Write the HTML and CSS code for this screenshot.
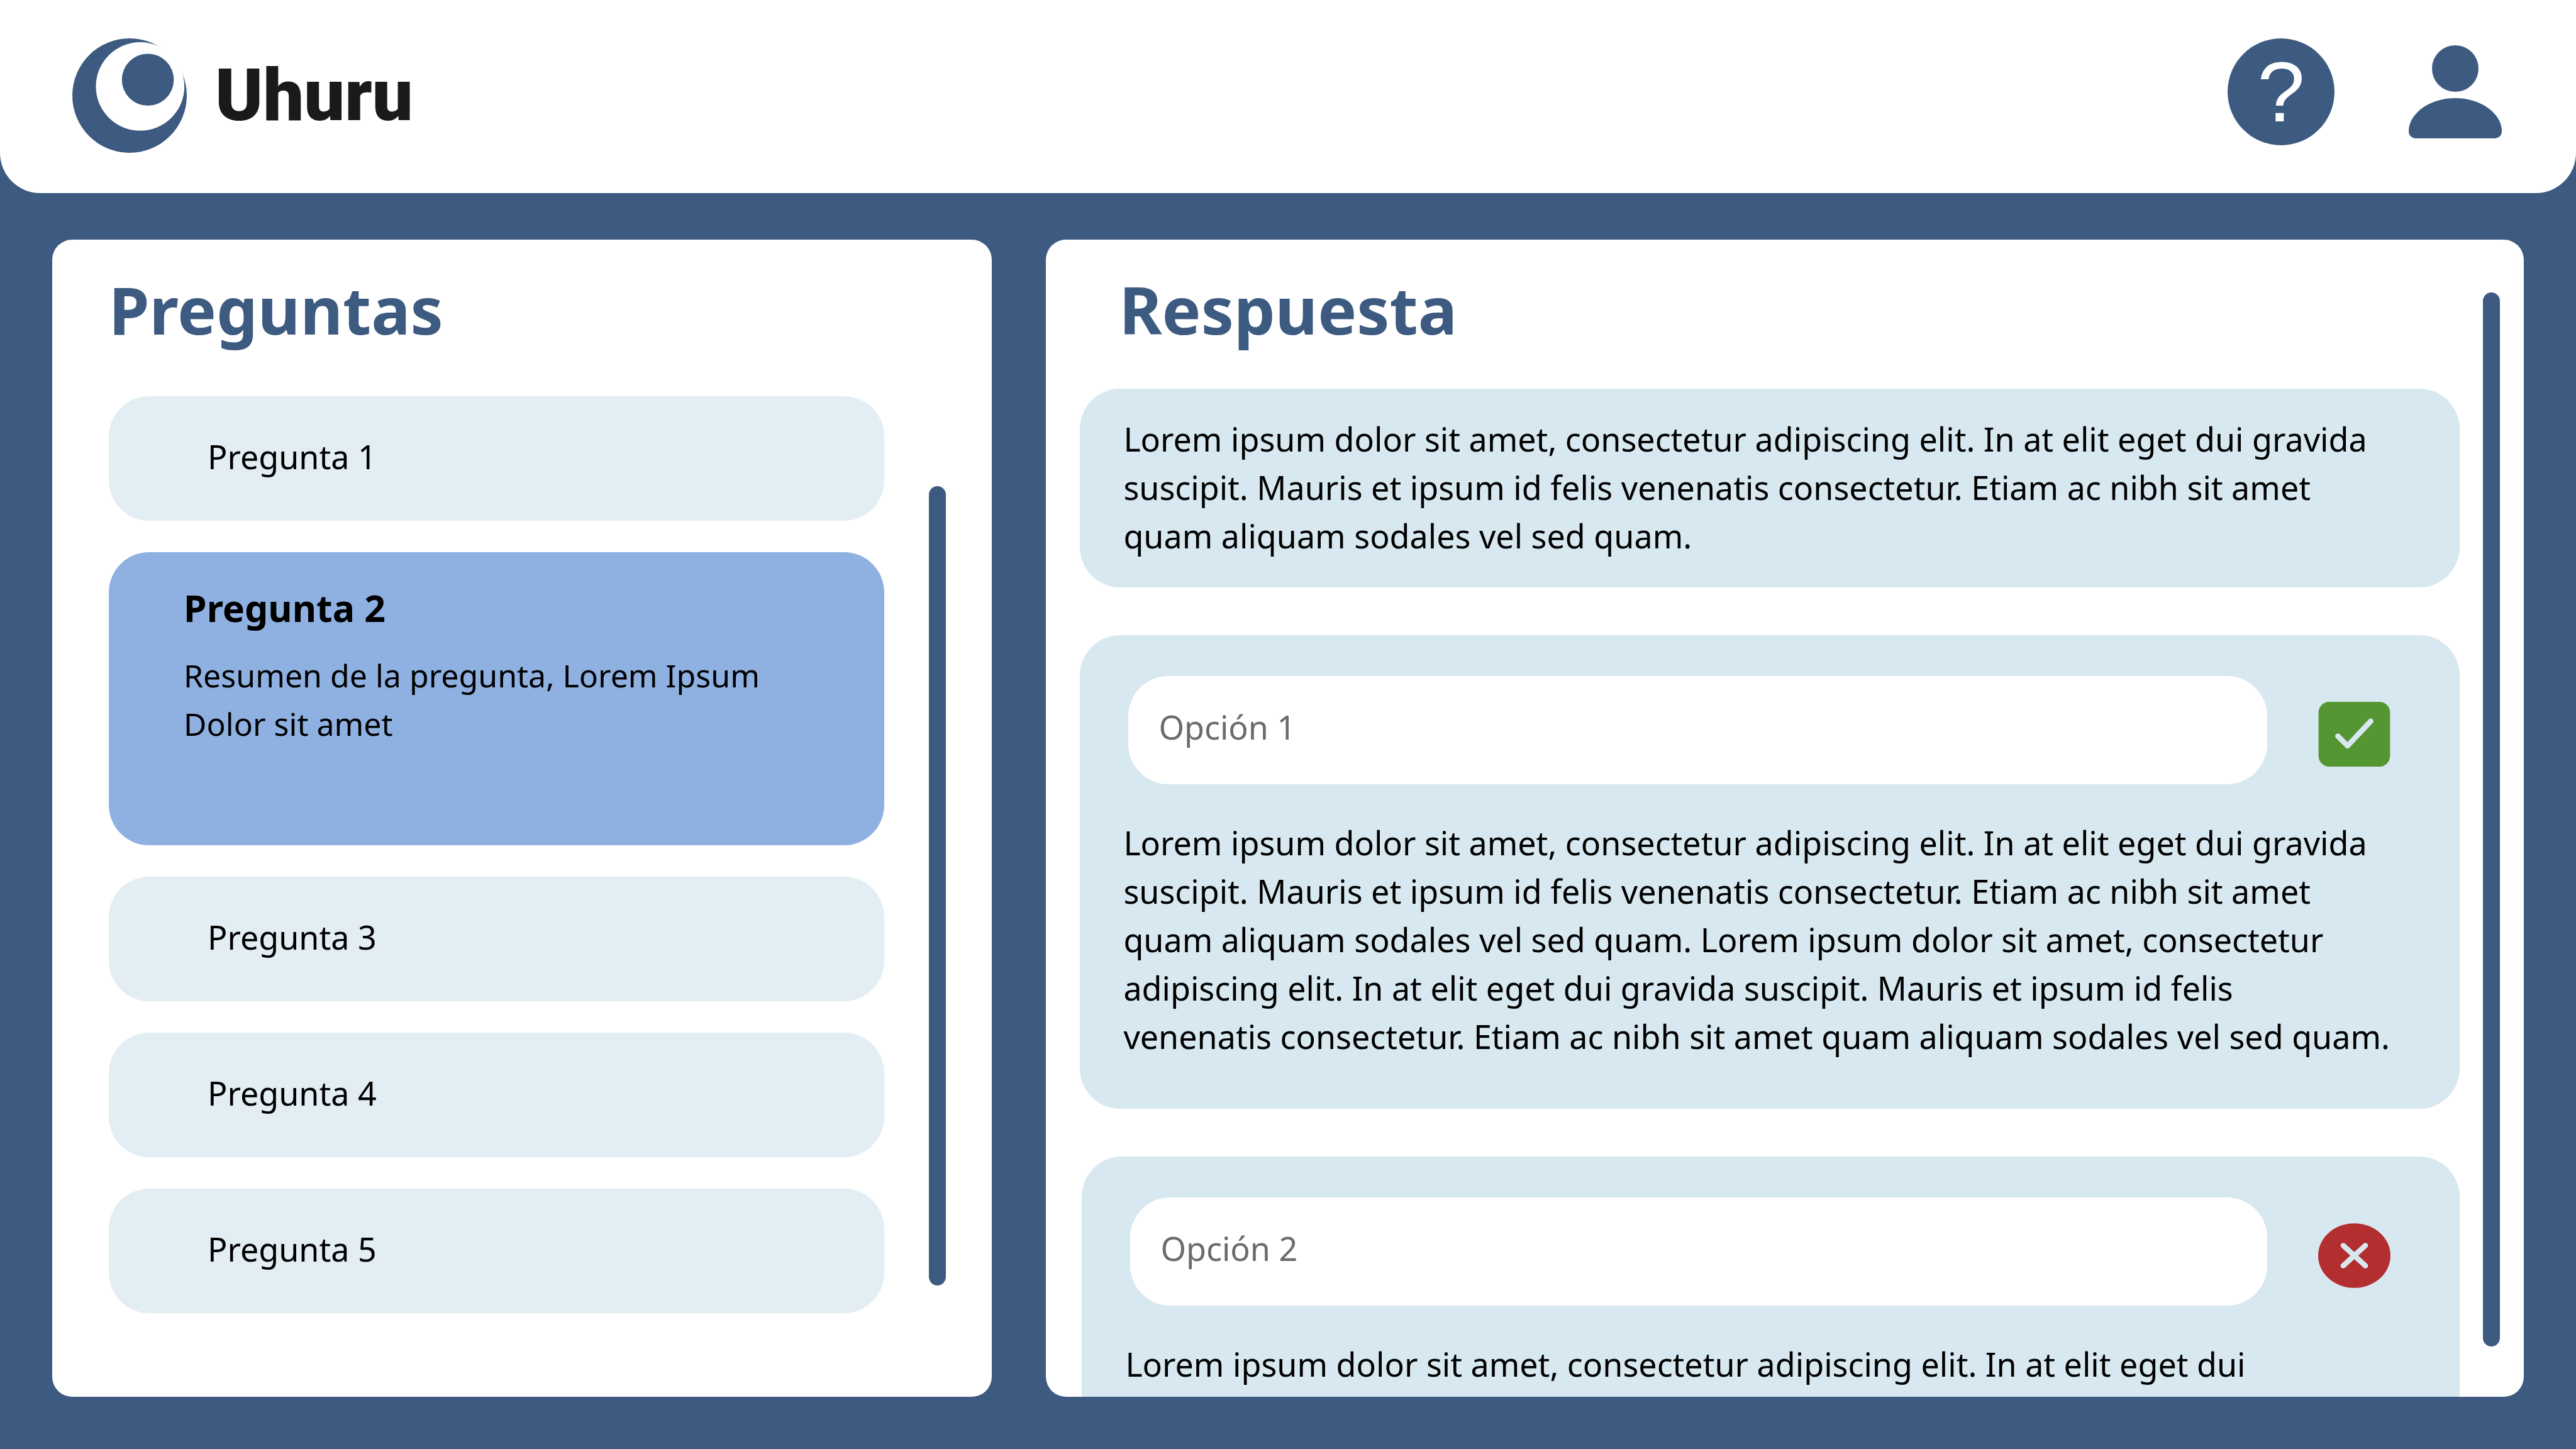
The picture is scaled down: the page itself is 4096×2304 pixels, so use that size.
FILE: index.html
```html
<!DOCTYPE html>
<html lang="es">
<head>
  <meta charset="utf-8">
  <meta name="viewport" content="width=device-width, initial-scale=1">
  <title>Uhuru</title>
  <link rel="stylesheet" href="styles.css">
</head>
<body>
  <header class="topbar">
    <a class="brand" href="#">
      <svg class="brand-logo" viewBox="0 0 238 238" aria-hidden="true">
        <circle class="fill-primary" cx="119" cy="119" r="119"/>
        <circle class="fill-surface" cx="141" cy="100" r="92"/>
        <circle class="fill-primary" cx="157" cy="86" r="54"/>
      </svg>
      <span class="brand-name">Uhuru</span>
    </a>
    <nav class="actions" aria-label="Cuenta">
      <button class="help" type="button" aria-label="Ayuda">?</button>
      <button class="user" type="button" aria-label="Perfil">
        <svg class="user-icon" viewBox="0 0 192 192" aria-hidden="true">
          <circle class="fill-primary" cx="96" cy="48" r="48"/>
          <path class="fill-primary" d="M14 192C5 191 0 185 0 177C0 141 43 109 96 109S192 141 192 177C192 185 187 191 178 192Z"/>
        </svg>
      </button>
    </nav>
  </header>

  <main class="board">
    <section class="panel questions" aria-labelledby="questions-title">
      <div class="panel-body">
        <h1 class="title" id="questions-title">Preguntas</h1>
        <ul class="question-list">
          <li><button class="question" type="button">Pregunta 1</button></li>
          <li>
            <button class="question question-open" type="button" aria-pressed="true">
              <span class="question-name">Pregunta 2</span>
              <span class="question-summary">Resumen de la pregunta, Lorem Ipsum Dolor sit amet</span>
            </button>
          </li>
          <li><button class="question" type="button">Pregunta 3</button></li>
          <li><button class="question" type="button">Pregunta 4</button></li>
          <li><button class="question" type="button">Pregunta 5</button></li>
        </ul>
      </div>
      <div class="scrollbar"></div>
    </section>

    <section class="panel answer" aria-labelledby="answer-title">
      <div class="panel-body">
        <h1 class="title" id="answer-title">Respuesta</h1>
        <div class="answer-list">
          <article class="card">
            <p class="text">Lorem ipsum dolor sit amet, consectetur adipiscing elit. In at elit eget dui gravida suscipit. Mauris et ipsum id felis venenatis consectetur. Etiam ac nibh sit amet quam aliquam sodales vel sed quam.</p>
          </article>
          <article class="card card-option">
            <div class="option-row">
              <input class="option" type="text" placeholder="Opción 1" aria-label="Opción 1">
              <svg class="mark" viewBox="0 0 148 134" role="img" aria-label="Correcta">
                <rect class="fill-right" width="148" height="134" rx="22"/>
                <path class="mark-line" d="M40 71L60 91L108 40"/>
              </svg>
            </div>
            <p class="text">Lorem ipsum dolor sit amet, consectetur adipiscing elit. In at elit eget dui gravida suscipit. Mauris et ipsum id felis venenatis consectetur. Etiam ac nibh sit amet quam aliquam sodales vel sed quam. Lorem ipsum dolor sit amet, consectetur adipiscing elit. In at elit eget dui gravida suscipit. Mauris et ipsum id felis<br>venenatis consectetur. Etiam ac nibh sit amet quam aliquam sodales vel sed quam.</p>
          </article>
          <article class="card card-option card-last">
            <div class="option-row">
              <input class="option" type="text" placeholder="Opción 2" aria-label="Opción 2">
              <svg class="mark" viewBox="0 0 150 134" role="img" aria-label="Incorrecta">
                <ellipse class="fill-wrong" cx="75" cy="67" rx="75" ry="67"/>
                <path class="mark-line" d="M52 46L98 88M98 46L52 88"/>
              </svg>
            </div>
            <p class="text">Lorem ipsum dolor sit amet, consectetur adipiscing elit. In at elit eget dui</p>
          </article>
        </div>
      </div>
      <div class="scrollbar"></div>
    </section>
  </main>
</body>
</html>
```
FILE: styles.css
```css
:root {
  --primary: #3d5a80;
  --surface: #ffffff;
  --card: #d7e8f0;
  --item: #e3eef4;
  --item-open: #8eb1e1;
  --radius: 64px;
}

* {
  box-sizing: border-box;
}

body {
  display: flex;
  flex-direction: column;
  height: 100vh;
  margin: 0;
  overflow: hidden;
  background: var(--primary);
  color: #000000;
  font: 400 52px/77px "Noto Sans", sans-serif;
}

h1,
p,
ul {
  margin: 0;
  padding: 0;
}

ul {
  list-style: none;
}

button,
input {
  margin: 0;
  padding: 0;
  border: 0;
  background: none;
  color: inherit;
  font: inherit;
}

.fill-primary { fill: var(--primary); }
.fill-surface { fill: var(--surface); }
.fill-right { fill: #539632; }
.fill-wrong { fill: #b32e2e; }

.topbar {
  display: flex;
  align-items: flex-start;
  justify-content: space-between;
  padding: 61px 118px 64px 115px;
  border-radius: 0 0 var(--radius) var(--radius);
  background: var(--surface);
}

.brand {
  display: flex;
  align-items: center;
  gap: 45px;
  color: #1a1a1a;
  text-decoration: none;
}

.brand-logo {
  width: 182px;
  height: 182px;
}

.brand-name {
  font: 900 115px/140px Roboto, sans-serif;
}

.actions {
  display: flex;
  align-items: center;
  gap: 118px;
}

.help {
  width: 170px;
  height: 170px;
  border-radius: 50%;
  background: var(--primary);
  color: var(--surface);
  font: 400 136px/170px "Liberation Sans", sans-serif;
}

.user,
.user-icon {
  display: block;
  width: 148px;
  height: 148px;
}

.board {
  display: grid;
  flex: 1;
  grid-template-columns: 1494fr 2349fr;
  gap: 86px;
  min-height: 0;
  padding: 74px 83px 83px;
}

.panel {
  display: flex;
  min-height: 0;
  overflow: hidden;
  border-radius: 32px;
  background: var(--surface);
}

.panel-body {
  flex: 1;
  min-width: 0;
  padding-top: 41px;
}

.title {
  color: var(--primary);
  font-size: 104px;
  font-weight: 700;
  line-height: 140px;
}

.scrollbar {
  flex: none;
  width: 27px;
  border-radius: 14px;
  background: var(--primary);
}

.questions {
  gap: 71px;
  padding: 0 73px 0 90px;
}

.questions .scrollbar {
  margin: 392px 0 177px;
}

.question-list {
  display: flex;
  flex-direction: column;
  gap: 50px;
  padding-top: 68px;
}

.question {
  display: block;
  width: 100%;
  min-height: 198px;
  padding: 0 157px 8px;
  border-radius: var(--radius);
  background: var(--item);
  text-align: left;
}

.question-open {
  display: flex;
  flex-direction: column;
  justify-content: flex-start;
  min-height: 466px;
  padding: 50px 119px;
  background: var(--item-open);
}

.question-name {
  margin-bottom: 31px;
  font-size: 59px;
  font-weight: 700;
}

.question-summary {
  font-size: 50px;
}

.answer {
  gap: 37px;
  padding: 0 38px 0 54px;
}

.answer .title {
  padding-left: 62px;
}

.answer .scrollbar {
  margin: 84px 0 80px;
}

.answer-list {
  display: flex;
  flex-direction: column;
  gap: 76px;
  padding-top: 56px;
}

.card {
  padding: 41px 100px 44px 69px;
  border-radius: var(--radius);
  background: var(--card);
}

.card-option {
  padding-top: 65px;
  padding-bottom: 77px;
}

.card-last {
  margin-left: 3px;
}

.option-row {
  display: flex;
  align-items: center;
  gap: 81px;
  margin-bottom: 54px;
  padding: 0 10px 0 8px;
}

.option {
  flex: 1;
  min-width: 0;
  height: 172px;
  padding: 0 48px 12px;
  border-radius: var(--radius);
  background: var(--surface);
}

.option::placeholder {
  color: #6b6b6b;
  opacity: 1;
}

.mark {
  flex: none;
  width: 115px;
  height: 103px;
  margin-top: 12px;
}

.mark-line {
  fill: none;
  stroke: var(--card);
  stroke-width: 11;
  stroke-linecap: round;
  stroke-linejoin: round;
}
```
